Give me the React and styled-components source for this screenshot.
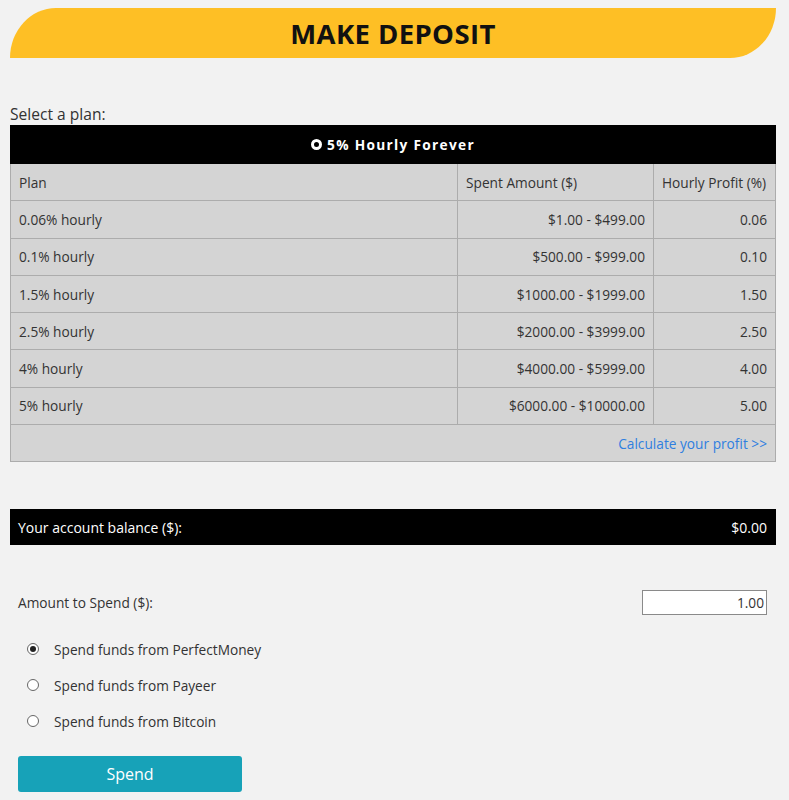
import React from "react";
import styled, { createGlobalStyle } from "styled-components";

const Global = createGlobalStyle`
  html, body { margin: 0; padding: 0; background: #f2f2f2; }
  body { font-family: "Open Sans", "Liberation Sans", sans-serif; color: #333; }
  * { box-sizing: border-box; }
`;

const Page = styled.div`
  width: 766px;
  margin-left: 10px;
  padding-top: 8px;
  padding-bottom: 8px;
`;

const Banner = styled.div`
  height: 50px;
  background: #febf25;
  border-radius: 46px 0 46px 0 / 50px 0 50px 0;
  display: flex;
  align-items: center;
  justify-content: center;
`;

const Title = styled.h1`
  margin: 0;
  font-size: 27.5px;
  font-weight: 700;
  color: #111;
  letter-spacing: 0.4px;
`;

const Caption = styled.div`
  margin-top: 45px;
  font-size: 15.6px;
  line-height: 22px;
  color: #333;
`;

const Table = styled.table`
  width: 100%;
  border-collapse: collapse;
  border: 1px solid #acacac;
  font-size: 13.7px;
  color: #333;
`;

const PlanHead = styled.th`
  background: #000;
  color: #fff;
  height: 38px;
  font-size: 13.7px;
  font-weight: 700;
  letter-spacing: 1.3px;
  text-align: center;
  padding: 0;
  border: 1px solid #000;
`;

const PlanTitle = styled.span`
  display: inline-flex;
  align-items: center;
  gap: 5px;
`;

const Ring = styled.span`
  width: 11px;
  height: 11px;
  border-radius: 50%;
  border: 3px solid #fff;
  display: inline-block;
`;

const Cell = styled.td`
  background: #d4d4d4;
  border: 1px solid #acacac;
  height: 37.3px;
  padding: 0 8px;
  text-align: ${(p) => (p.$right ? "right" : "left")};
  width: ${(p) => p.$w || "auto"};
  white-space: nowrap;
`;

const CalcLink = styled.a`
  color: #2f7fe0;
  text-decoration: none;
  font-size: 13.7px;
`;

const BalanceBar = styled.div`
  margin-top: 47px;
  height: 36px;
  background: #000;
  color: #fff;
  display: flex;
  align-items: center;
  justify-content: space-between;
  padding: 0 9px 0 8px;
  font-size: 14px;
  font-weight: 500;
`;

const AmountRow = styled.div`
  margin-top: 45px;
  display: flex;
  align-items: center;
  justify-content: space-between;
  padding: 0 9px 0 8px;
  font-size: 13.7px;
`;

const AmountInput = styled.input`
  width: 125px;
  height: 25px;
  border: 1px solid #8a8a8a;
  background: #fff;
  text-align: right;
  font-family: "Open Sans", "Liberation Sans", sans-serif;
  font-size: 13.7px;
  color: #333;
  padding: 0 2px;
  outline: none;
`;

const Methods = styled.div`
  margin-top: 16px;
  padding-left: 17px;
  display: flex;
  flex-direction: column;
`;

const Method = styled.label`
  height: 36px;
  display: flex;
  align-items: center;
  gap: 15px;
  font-size: 13.7px;
  color: #333;
`;

const RadioDot = styled.span`
  width: 12px;
  height: 12px;
  border-radius: 50%;
  border: 1px solid #666;
  background: #fff;
  display: inline-flex;
  align-items: center;
  justify-content: center;
  &::after {
    content: "";
    width: 6px;
    height: 6px;
    border-radius: 50%;
    background: ${(p) => (p.$on ? "#222" : "transparent")};
  }
`;

const SpendButton = styled.button`
  margin-top: 17px;
  margin-left: 8px;
  width: 224px;
  height: 36px;
  background: #17a2b8;
  color: #fff;
  border: none;
  border-radius: 3px;
  font-family: "Open Sans", "Liberation Sans", sans-serif;
  font-size: 16px;
  cursor: pointer;
`;

const plans = [
  ["0.06% hourly", "$1.00 - $499.00", "0.06"],
  ["0.1% hourly", "$500.00 - $999.00", "0.10"],
  ["1.5% hourly", "$1000.00 - $1999.00", "1.50"],
  ["2.5% hourly", "$2000.00 - $3999.00", "2.50"],
  ["4% hourly", "$4000.00 - $5999.00", "4.00"],
  ["5% hourly", "$6000.00 - $10000.00", "5.00"],
];

const methods = ["PerfectMoney", "Payeer", "Bitcoin"];

export default function App() {
  return (
    <>
      <Global />
      <Page>
        <Banner>
          <Title>MAKE DEPOSIT</Title>
        </Banner>
        <Caption>Select a plan:</Caption>
        <Table>
          <thead>
            <tr>
              <PlanHead colSpan={3}>
                <PlanTitle>
                  <Ring />
                  5% Hourly Forever
                </PlanTitle>
              </PlanHead>
            </tr>
          </thead>
          <tbody>
            <tr>
              <Cell $w="447px">Plan</Cell>
              <Cell $w="196px">Spent Amount ($)</Cell>
              <Cell>Hourly Profit (%)</Cell>
            </tr>
            {plans.map(([name, range, pct]) => (
              <tr key={name}>
                <Cell>{name}</Cell>
                <Cell $right>{range}</Cell>
                <Cell $right>{pct}</Cell>
              </tr>
            ))}
            <tr>
              <Cell colSpan={3} $right>
                <CalcLink href="#">Calculate your profit &gt;&gt;</CalcLink>
              </Cell>
            </tr>
          </tbody>
        </Table>
        <BalanceBar>
          <span>Your account balance ($):</span>
          <span>$0.00</span>
        </BalanceBar>
        <AmountRow>
          <span>Amount to Spend ($):</span>
          <AmountInput defaultValue="1.00" />
        </AmountRow>
        <Methods>
          {methods.map((m, i) => (
            <Method key={m}>
              <RadioDot $on={i === 0} />
              Spend funds from {m}
            </Method>
          ))}
        </Methods>
        <SpendButton>Spend</SpendButton>
      </Page>
    </>
  );
}
